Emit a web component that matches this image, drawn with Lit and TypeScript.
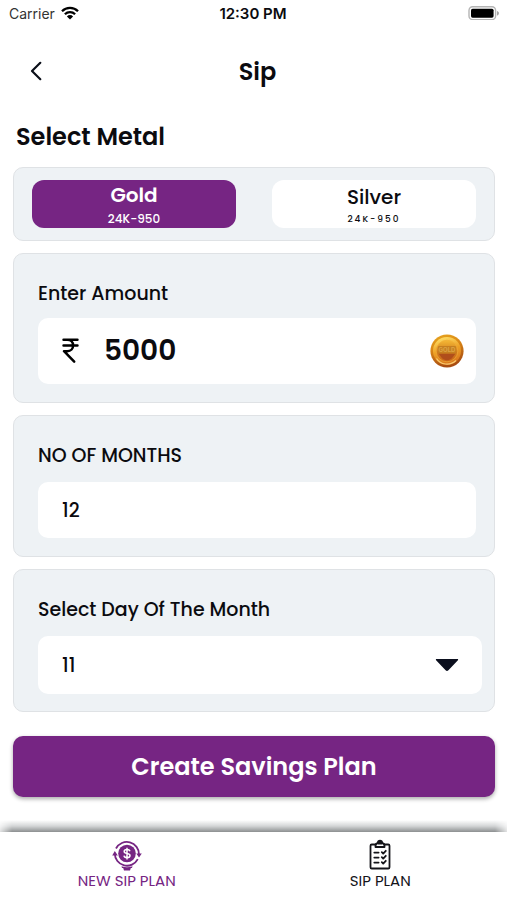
import { LitElement, html, css, svg } from "lit";
import { customElement, state } from "lit/decorators.js";

const wifiIcon = svg`
  <svg class="wifi" viewBox="0 0 18 14" aria-hidden="true">
    <g fill="none" stroke="#000" stroke-width="2.3">
      <path d="M1 5.2A11.3 11.3 0 0 1 17 5.2" />
      <path d="M3.9 8.2A7.2 7.2 0 0 1 14.1 8.2" />
    </g>
    <path d="M9 13.6 5.9 10.4A4.4 4.4 0 0 1 12.1 10.4Z" />
  </svg>`;

const batteryIcon = svg`
  <svg class="battery" viewBox="0 0 32 14" aria-hidden="true">
    <rect x="1" y="0.8" width="26.6" height="12.8" rx="3.6" fill="#fff" stroke="#b4b4b4" stroke-width="1.4" />
    <rect x="3" y="2.7" width="22.6" height="9" rx="1.6" />
    <path d="M29 4.9c1.5.4 1.9 1.3 1.9 2.3S30.500 9.100 29 9.500Z" fill="#a4a4a4" />
  </svg>`;

const backIcon = svg`
  <svg class="back-icon" viewBox="0 0 14 20" aria-hidden="true">
    <path d="M11.300 1.800 3 10l8.300 8.200" fill="none" stroke="#0b0f19" stroke-width="2.200" stroke-linecap="round" stroke-linejoin="round" />
  </svg>`;

const rupeeIcon = svg`
  <svg class="rupee" viewBox="0 0 18 28" aria-hidden="true">
    <g fill="none" stroke="#000" stroke-width="2.700" stroke-linecap="round" stroke-linejoin="round">
      <path d="M1.500 2H16.500M1.500 8H16.500M1.500 2H5.500C9.500 2 11.800 4.600 11.800 8S9.500 14.200 5.500 14.200H2L13 25.500" />
    </g>
  </svg>`;

const coinIcon = svg`
  <svg class="coin" viewBox="0 0 34 34" aria-hidden="true">
    <defs>
      <linearGradient id="rim" x1="0" y1="0" x2="0.300" y2="1">
        <stop offset="0" stop-color="#e9a91f" />
        <stop offset="0.450" stop-color="#d98617" />
        <stop offset="1" stop-color="#a84d12" />
      </linearGradient>
      <linearGradient id="face" x1="0.200" y1="0" x2="0.500" y2="1">
        <stop offset="0" stop-color="#ffe26a" />
        <stop offset="0.500" stop-color="#eda126" />
        <stop offset="1" stop-color="#d9741c" />
      </linearGradient>
      <linearGradient id="core" x1="0" y1="0" x2="0" y2="1">
        <stop offset="0" stop-color="#f5b935" />
        <stop offset="0.550" stop-color="#d07a1c" />
        <stop offset="1" stop-color="#c9651a" />
      </linearGradient>
    </defs>
    <circle cx="17" cy="17" r="16.600" fill="url(#rim)" />
    <circle cx="17" cy="17" r="14" fill="url(#face)" />
    <circle cx="17" cy="17" r="10.800" fill="url(#core)" stroke="#f0ad38" stroke-width="0.700" />
    <path d="M8.500 19.500H25.500L22.500 23.500C19.500 27 14.500 27 11.500 23.500Z" fill="#b04e1b" />
    <path d="M6.500 24.500C10.500 31 20 32 26 26.500" fill="none" stroke="#ffe08a" stroke-width="1.200" opacity="0.800" />
    <rect x="8" y="12" width="18" height="7.500" rx="1" fill="#c67f20" />
    <text x="17" y="18" text-anchor="middle" font-size="6" font-weight="700" fill="#dda444">GOLD</text>
  </svg>`;

const caretIcon = svg`
  <svg class="caret" viewBox="0 0 24 14" aria-hidden="true">
    <path d="M1.600 1H22.400C23.200 1 23.400 1.700 22.900 2.200L13.400 12.200Q12 13.600 10.600 12.200L1.100 2.200C.600 1.700.800 1 1.600 1Z" fill="#0b0f1e" />
  </svg>`;

const newPlanIcon = svg`
  <svg class="tab-icon" viewBox="0 0 30 32" aria-hidden="true">
    <circle cx="15" cy="14.500" r="8.800" fill="currentColor" />
    <g fill="none" stroke="currentColor" stroke-width="1.800">
      <path d="M4 9.500A12.200 12.200 0 0 1 27 15.500" />
      <path d="M2.800 14.500A12.200 12.200 0 0 0 25.800 20.200" />
    </g>
    <path d="M.200 16.500 2.800 12 5.800 16.500ZM24.300 14.500H29.800L27 18.500Z" fill="currentColor" />
    <path d="M9.500 27.300Q15 29.300 20.500 27.300L20 29H18.800L18 31.500H12L11.200 29H10Z" fill="currentColor" />
    <path d="M18 12.200C17.600 10.900 16.500 10.500 15 10.500 13.300 10.500 12.200 11.200 12.200 12.500 12.200 15.400 18 13.700 18 16.600 18 18 16.700 18.700 15 18.700 13.300 18.700 12.200 18 12 16.700M15 8.800V20.400" fill="none" stroke="#fff" stroke-width="1.500" />
  </svg>`;

const planListIcon = svg`
  <svg class="tab-icon" viewBox="0 0 30 32" aria-hidden="true">
    <g fill="none" stroke="currentColor" stroke-width="1.800" stroke-linecap="round" stroke-linejoin="round">
      <path d="M11 5.500H6.800C6 5.500 5.500 6 5.500 6.800V28.200C5.500 29 6 29.500 6.800 29.500H23.200C24 29.500 24.500 29 24.500 28.200V6.800C24.500 6 24 5.500 23.200 5.500H19" />
      <path d="M9.300 13.600H13.600M9.300 18.600H13.600M9.300 23.600H13.600" />
      <path d="M16.800 13.200 18.200 14.600 20.800 11.800M16.800 18.200 18.200 19.600 20.800 16.800M16.800 23.200 18.200 24.600 20.800 21.800" />
      <path d="M10.500 8V6.300C10.500 5 11.500 4.300 12.800 4.100 12.500.800 17.500.800 17.200 4.100 18.500 4.300 19.500 5 19.500 6.300V8Z" />
    </g>
    <path d="M12.500 5.500V4.500L13 4C13 .500 17 .500 17 4L17.500 4.500V5.500Z" fill="currentColor" />
  </svg>`;

const metals = [
  { id: "gold", name: "Gold", purity: "24K-950" },
  { id: "silver", name: "Silver", purity: "24K-950" },
];

const days = Array.from({ length: 28 }, (_, i) => i + 1);

@customElement("app-root")
export class AppRoot extends LitElement {
  @state() private metal = "gold";

  static styles = css`
    :host {
      display: flex;
      flex-direction: column;
      min-height: 100vh;
      background: #fff;
      color: #0b0b0f;
      font-family: Poppins, Inter, "Noto Sans", sans-serif;
    }
    *,
    *::before {
      box-sizing: border-box;
    }
    button,
    input,
    select {
      font: inherit;
      color: inherit;
      border: 0;
      margin: 0;
      padding: 0;
      background: none;
    }
    svg {
      display: block;
    }
    .status {
      display: grid;
      grid-template-columns: 1fr auto 1fr;
      align-items: center;
      height: 26px;
      padding: 0 7px 0 6px;
      font-family: Inter, sans-serif;
    }
    .carrier {
      display: flex;
      align-items: center;
      gap: 6px;
      padding-left: 3px;
      color: #333;
      font-size: 14px;
    }
    .time {
      font-size: 15px;
      font-weight: 600;
    }
    .wifi {
      width: 18px;
      height: 14px;
    }
    .battery {
      width: 32px;
      height: 14px;
      justify-self: end;
    }
    .header {
      display: grid;
      grid-template-columns: 40px 1fr 40px;
      align-items: center;
      height: 90px;
      padding: 0 8px 0 16px;
    }
    .back {
      display: grid;
      place-items: center;
      height: 40px;
      cursor: pointer;
    }
    .back-icon {
      width: 14px;
      height: 20px;
    }
    .title {
      margin: 0;
      text-align: center;
      font-size: 24px;
      font-weight: 600;
    }
    .main {
      display: flex;
      flex-direction: column;
      gap: 12px;
      padding: 0 12px 24px 13px;
    }
    .heading {
      margin: 0;
      padding: 2px 3px 0;
      font-size: 24px;
      line-height: 37px;
      font-weight: 600;
    }
    .card {
      padding: 24px;
      border: 1px solid #dfe2e5;
      border-radius: 10px;
      background: #eef2f5;
    }
    .metals {
      display: grid;
      grid-template-columns: 1fr 1fr;
      gap: 36px;
      padding: 12px 18px;
    }
    .metal {
      display: flex;
      flex-direction: column;
      align-items: center;
      height: 48px;
      padding-top: 5px;
      border-radius: 12px;
      background: #fff;
      cursor: pointer;
    }
    .name {
      font-size: 20px;
      line-height: 24px;
      font-weight: 500;
    }
    .purity {
      font-size: 9px;
      line-height: 20px;
      letter-spacing: 2px;
      font-weight: 500;
    }
    .selected {
      padding-top: 3px;
      background: #762583;
      color: #fff;
    }
    .selected .name {
      font-weight: 600;
    }
    .selected .purity {
      font-size: 12px;
      line-height: 24px;
      letter-spacing: normal;
    }
    .label {
      display: block;
      margin-bottom: 10px;
      font-size: 19px;
      line-height: 32px;
      font-weight: 500;
    }
    .card.field {
      padding: 24px 18px 18px 24px;
    }
    .box {
      display: flex;
      align-items: center;
      width: 100%;
      height: 56px;
      padding: 0 12px 0 24px;
      border-radius: 10px;
      background: #fff;
      font-size: 19px;
      font-weight: 500;
    }
    .card.money .label {
      margin-bottom: 8px;
    }
    .amount {
      height: 66px;
      gap: 25px;
    }
    .amount-input {
      flex: 1;
      min-width: 0;
      font-size: 28px;
      font-weight: 600;
    }
    .rupee {
      width: 17px;
      height: 26px;
    }
    .coin {
      width: 34px;
      height: 34px;
      font-family: Inter, sans-serif;
    }
    .card.wide {
      padding-right: 12px;
      padding-bottom: 17px;
    }
    .picker {
      display: grid;
      align-items: center;
    }
    .picker > * {
      grid-area: 1 / 1;
    }
    .day {
      height: 58px;
      appearance: none;
      cursor: pointer;
    }
    .caret {
      width: 24px;
      height: 14px;
      margin-right: 23px;
      justify-self: end;
      pointer-events: none;
    }
    .create {
      height: 61px;
      margin-top: 12px;
      border-radius: 10px;
      background: #762583;
      box-shadow: 0 2px 4px #0005;
      color: #fff;
      font-size: 24px;
      font-weight: 600;
      cursor: pointer;
    }
    .tabs {
      position: relative;
      display: grid;
      grid-template-columns: 1fr 1fr;
      height: 68px;
      margin-top: auto;
      background: #fff;
    }
    .tabs::before {
      content: "";
      position: absolute;
      inset: -12px 0 100%;
      background: linear-gradient(#fff0, #d4d6d7 50%, #8c8f90);
      mask-image: linear-gradient(90deg, #0004, #000 12px calc(100% - 12px), #0004);
    }
    .tab {
      display: flex;
      flex-direction: column;
      align-items: center;
      padding-top: 7px;
      color: #15151a;
      font-size: 15px;
      line-height: 20px;
      text-decoration: none;
    }
    .current {
      color: #762583;
    }
    .tab-icon {
      width: 30px;
      height: 32px;
    }
  `;

  render() {
    return html`
      <div class="status">
        <span class="carrier">Carrier ${wifiIcon}</span>
        <span class="time">12:30 PM</span>
        ${batteryIcon}
      </div>
      <header class="header">
        <button class="back" aria-label="Back">${backIcon}</button>
        <h1 class="title">Sip</h1>
      </header>
      <main class="main">
        <h2 class="heading">Select Metal</h2>
        <section class="card metals">
          ${metals.map(
            (m) => html`
              <button
                class="metal ${this.metal === m.id ? "selected" : ""}"
                aria-pressed=${this.metal === m.id ? "true" : "false"}
                @click=${() => (this.metal = m.id)}
              >
                <span class="name">${m.name}</span>
                <span class="purity">${m.purity}</span>
              </button>
            `
          )}
        </section>
        <section class="card field money">
          <label class="label" for="amount">Enter Amount</label>
          <div class="box amount">
            ${rupeeIcon}
            <input class="amount-input" id="amount" inputmode="numeric" value="5000" />
            ${coinIcon}
          </div>
        </section>
        <section class="card field">
          <label class="label" for="months">NO OF MONTHS</label>
          <input class="box" id="months" inputmode="numeric" value="12" />
        </section>
        <section class="card field wide">
          <label class="label" for="day">Select Day Of The Month</label>
          <div class="picker">
            <select class="box day" id="day">
              ${days.map((d) => html`<option ?selected=${d === 11}>${d}</option>`)}
            </select>
            ${caretIcon}
          </div>
        </section>
        <button class="create">Create Savings Plan</button>
      </main>
      <nav class="tabs">
        <a class="tab current" href="#new" aria-current="page">${newPlanIcon}NEW SIP PLAN</a>
        <a class="tab" href="#plans">${planListIcon}SIP PLAN</a>
      </nav>
    `;
  }
}
